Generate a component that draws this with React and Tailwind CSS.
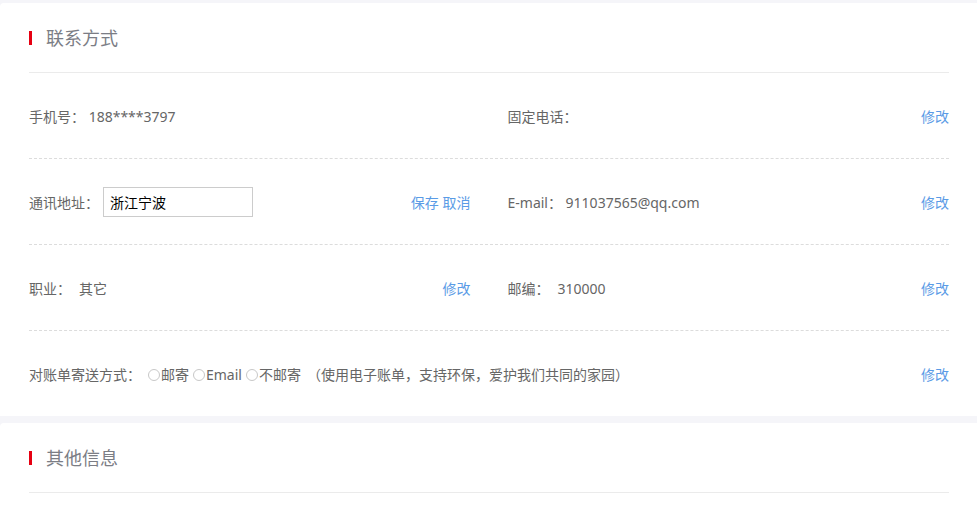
import React from 'react';

const font = { fontFamily: '"Noto Sans", "Noto Sans CJK SC", sans-serif' };

function Header({ title }) {
  return (
    <div className="h-[70px] flex items-center border-b border-[#ebebeb] pt-[1px]">
      <span className="w-[3px] h-[14px] bg-[#e60012] mr-[14px]" />
      <span className="text-[18px] text-[#7b7d85] leading-none">{title}</span>
    </div>
  );
}

function Edit({ children = '修改' }) {
  return <span className="text-[#5a9be6] cursor-pointer">{children}</span>;
}

function Radio({ label }) {
  return (
    <span className="inline-flex items-center">
      <span className="w-[12px] h-[12px] rounded-full border border-[#c8c8c8] mr-[1px]" />
      {label}
    </span>
  );
}

function Row({ children, last }) {
  return (
    <div className={`h-[86px] flex items-center pt-[1px] ${last ? '' : 'border-b border-dashed border-[#dcdcdc]'}`}>
      {children}
    </div>
  );
}

export default function App() {
  return (
    <div className="w-[977px] h-[508px] bg-[#f5f5f9] pt-[3px] overflow-hidden text-[14px] text-[#666]" style={font}>
      <div className="bg-white rounded-tl-[4px] px-[29px] pr-[28px] h-[413px]">
        <Header title="联系方式" />
        <Row>
          <div className="grid grid-cols-2 gap-[37px] w-full items-center">
            <div>手机号：&nbsp;188****3797</div>
            <div className="flex items-center justify-between">
              <span>固定电话：</span>
              <Edit />
            </div>
          </div>
        </Row>
        <Row>
          <div className="grid grid-cols-2 gap-[37px] w-full items-center">
            <div className="flex items-center justify-between">
              <div className="flex items-center">
                <span>通讯地址：</span>
                <input
                  defaultValue="浙江宁波"
                  className="ml-[4px] w-[150px] h-[30px] border border-[#cccccc] px-[6px] text-black outline-none"
                />
              </div>
              <span className="text-[#5a9be6]">保存 取消</span>
            </div>
            <div className="flex items-center justify-between">
              <span>E-mail：&nbsp;911037565@qq.com</span>
              <Edit />
            </div>
          </div>
        </Row>
        <Row>
          <div className="grid grid-cols-2 gap-[37px] w-full items-center">
            <div className="flex items-center justify-between">
              <span>职业：<span className="ml-[8px]">其它</span></span>
              <Edit />
            </div>
            <div className="flex items-center justify-between">
              <span>邮编：<span className="ml-[8px]">310000</span></span>
              <Edit />
            </div>
          </div>
        </Row>
        <Row last>
          <div className="flex items-center justify-between w-full">
            <div className="flex items-center gap-[4px]">
              <span className="mr-[3px]">对账单寄送方式：</span>
              <Radio label="邮寄" />
              <Radio label="Email" />
              <Radio label="不邮寄" />
              <span className="ml-[2px]">（使用电子账单，支持环保，爱护我们共同的家园）</span>
            </div>
            <Edit />
          </div>
        </Row>
      </div>
      <div className="h-[7px]" />
      <div className="bg-white rounded-tl-[4px] px-[29px] pr-[28px] h-[85px]">
        <Header title="其他信息" />
      </div>
    </div>
  );
}
